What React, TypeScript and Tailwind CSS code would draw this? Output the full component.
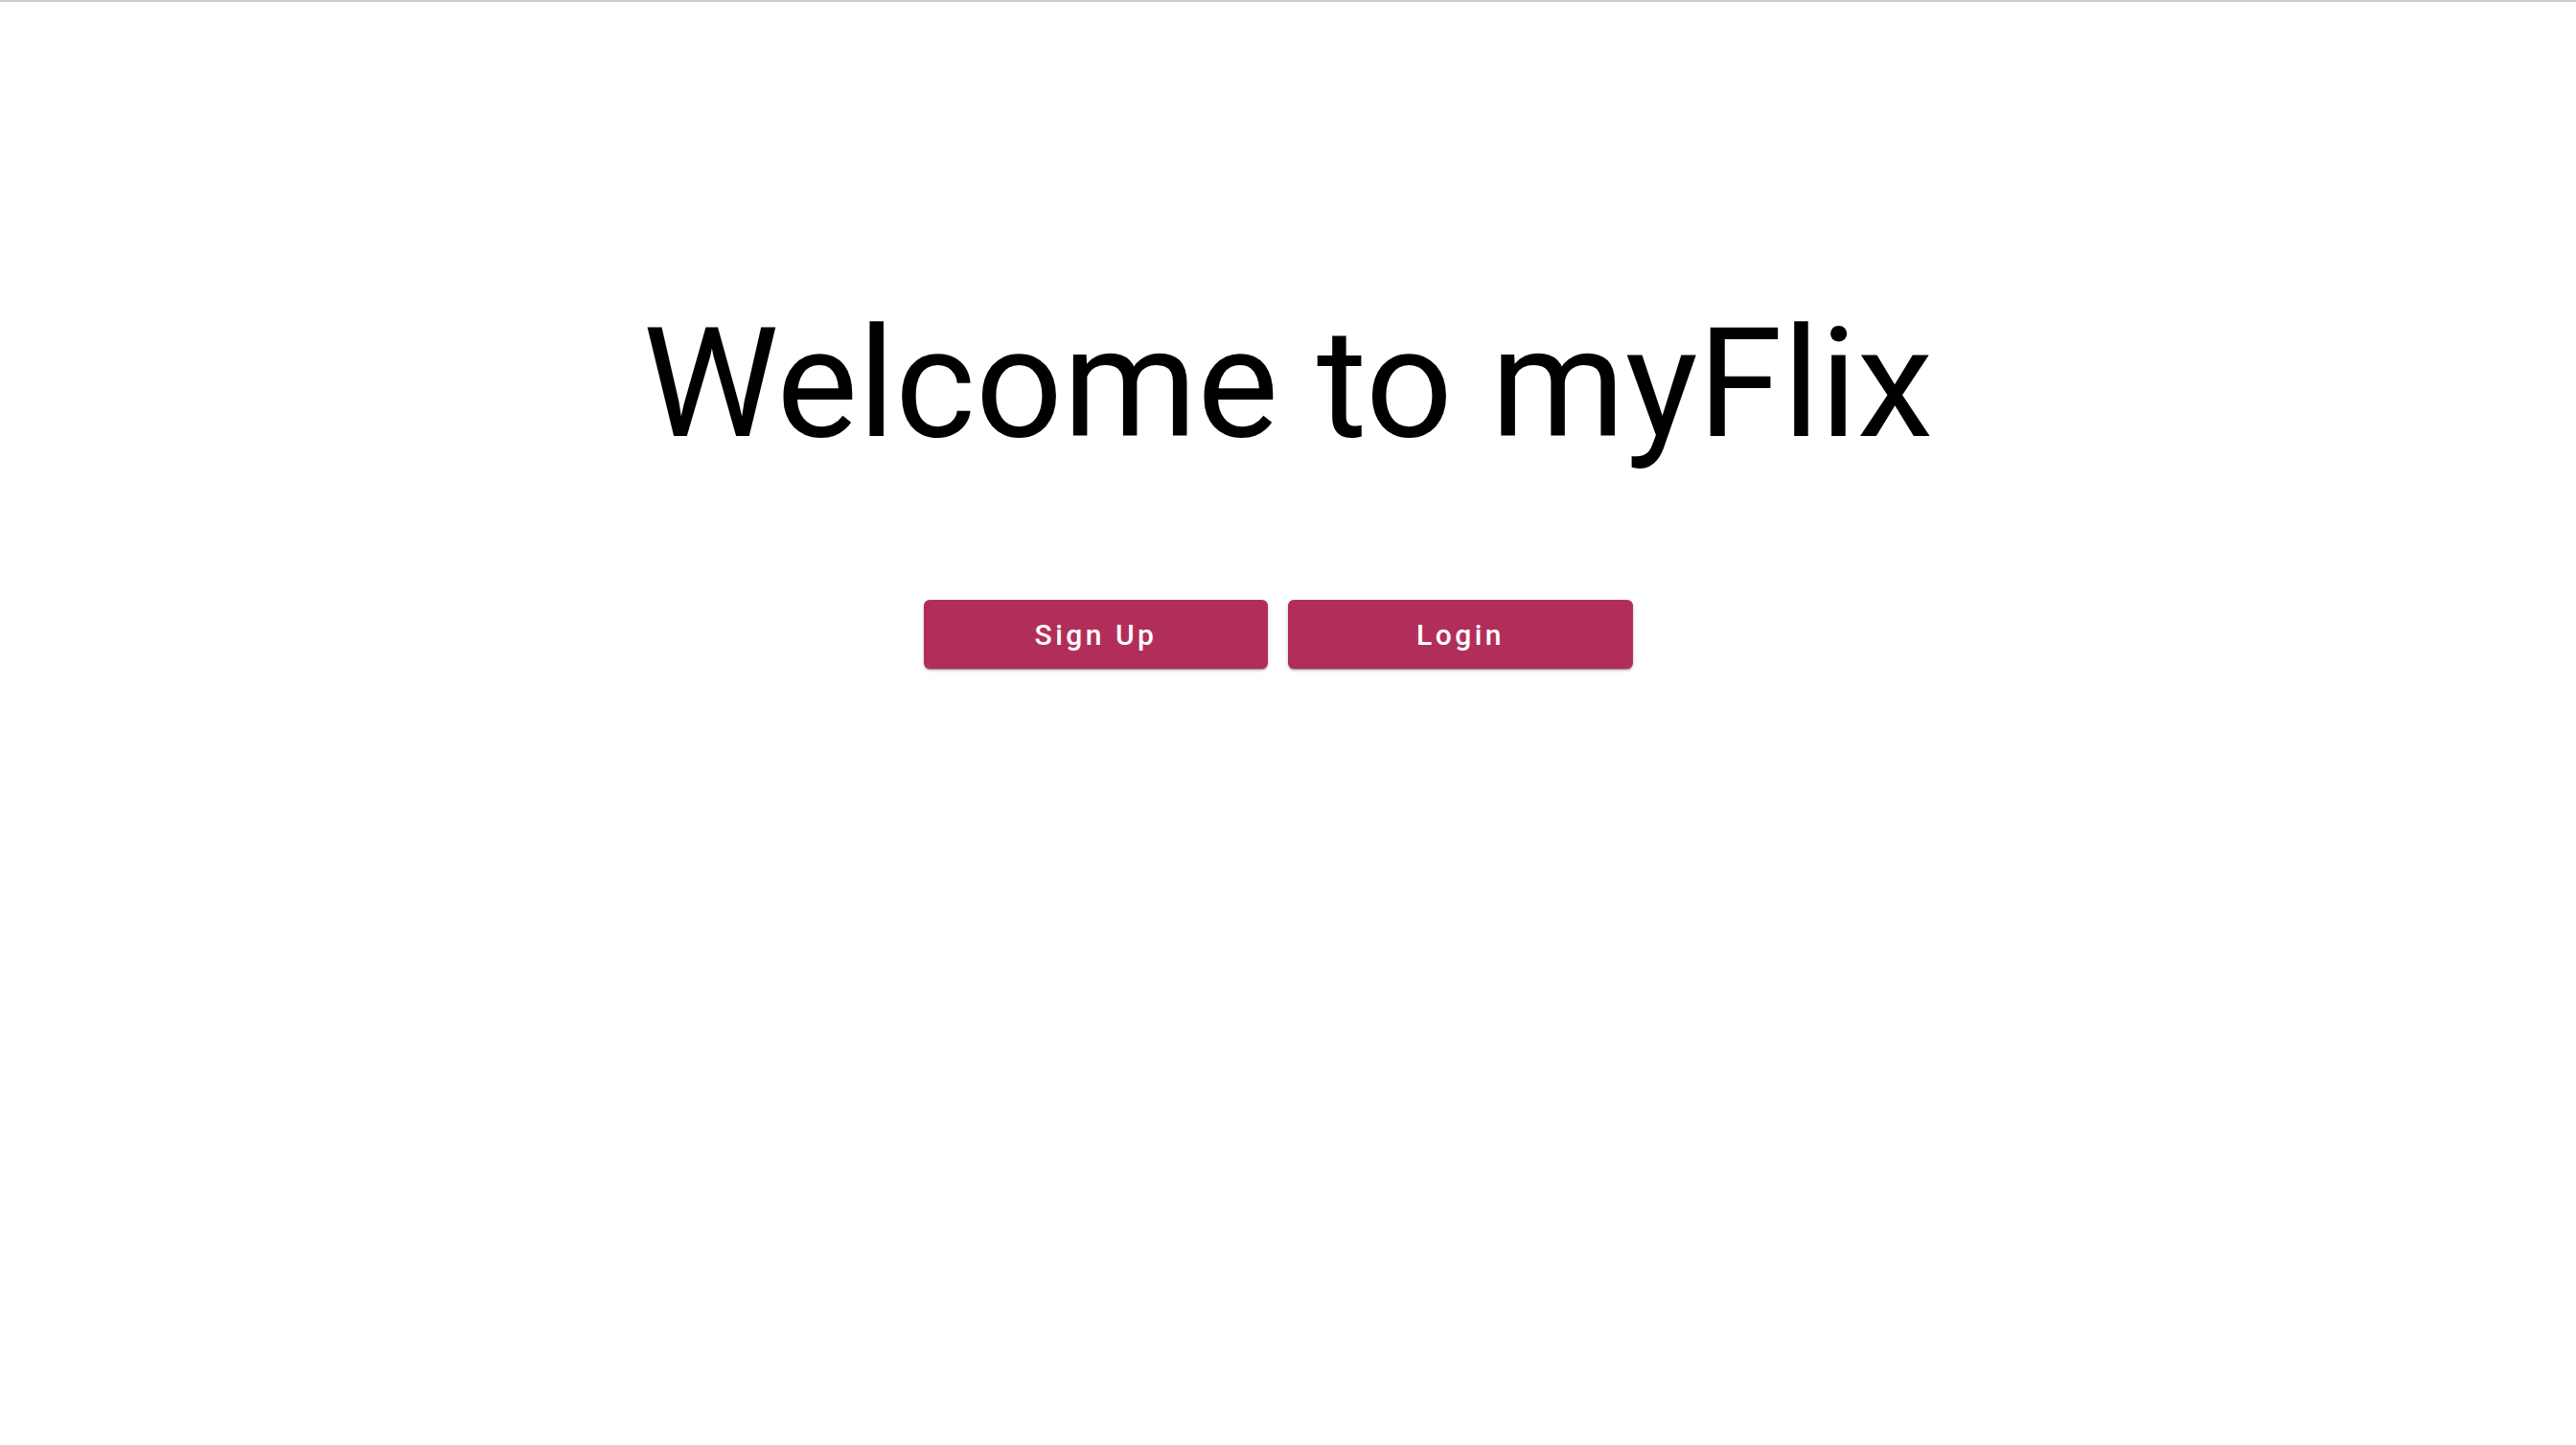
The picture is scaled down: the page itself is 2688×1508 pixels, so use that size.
import React from "react";

const App: React.FC = () => {
  return (
    <div className="min-h-screen bg-white" style={{ fontFamily: "Roboto, 'Liberation Sans', sans-serif" }}>
      <div className="h-[2px] bg-[#cbcbcb]" />
      <div className="flex flex-col items-center pt-[319px]">
        <h1 className="text-[160px] leading-none font-normal text-black">Welcome to myFlix</h1>
        <div className="mt-[145px] flex gap-[21px] pr-[20px]">
          <button
            type="button"
            className="w-[359px] h-[72px] rounded-[6px] bg-[#b22e5a] text-white text-[30px] font-medium tracking-[3.5px] shadow-[0_3px_1px_-2px_rgba(0,0,0,0.2),0_2px_2px_0_rgba(0,0,0,0.14),0_1px_5px_0_rgba(0,0,0,0.12)]"
          >
            Sign Up
          </button>
          <button
            type="button"
            className="w-[360px] h-[72px] rounded-[6px] bg-[#b22e5a] text-white text-[30px] font-medium tracking-[3.5px] shadow-[0_3px_1px_-2px_rgba(0,0,0,0.2),0_2px_2px_0_rgba(0,0,0,0.14),0_1px_5px_0_rgba(0,0,0,0.12)]"
          >
            Login
          </button>
        </div>
      </div>
    </div>
  );
};

export default App;
